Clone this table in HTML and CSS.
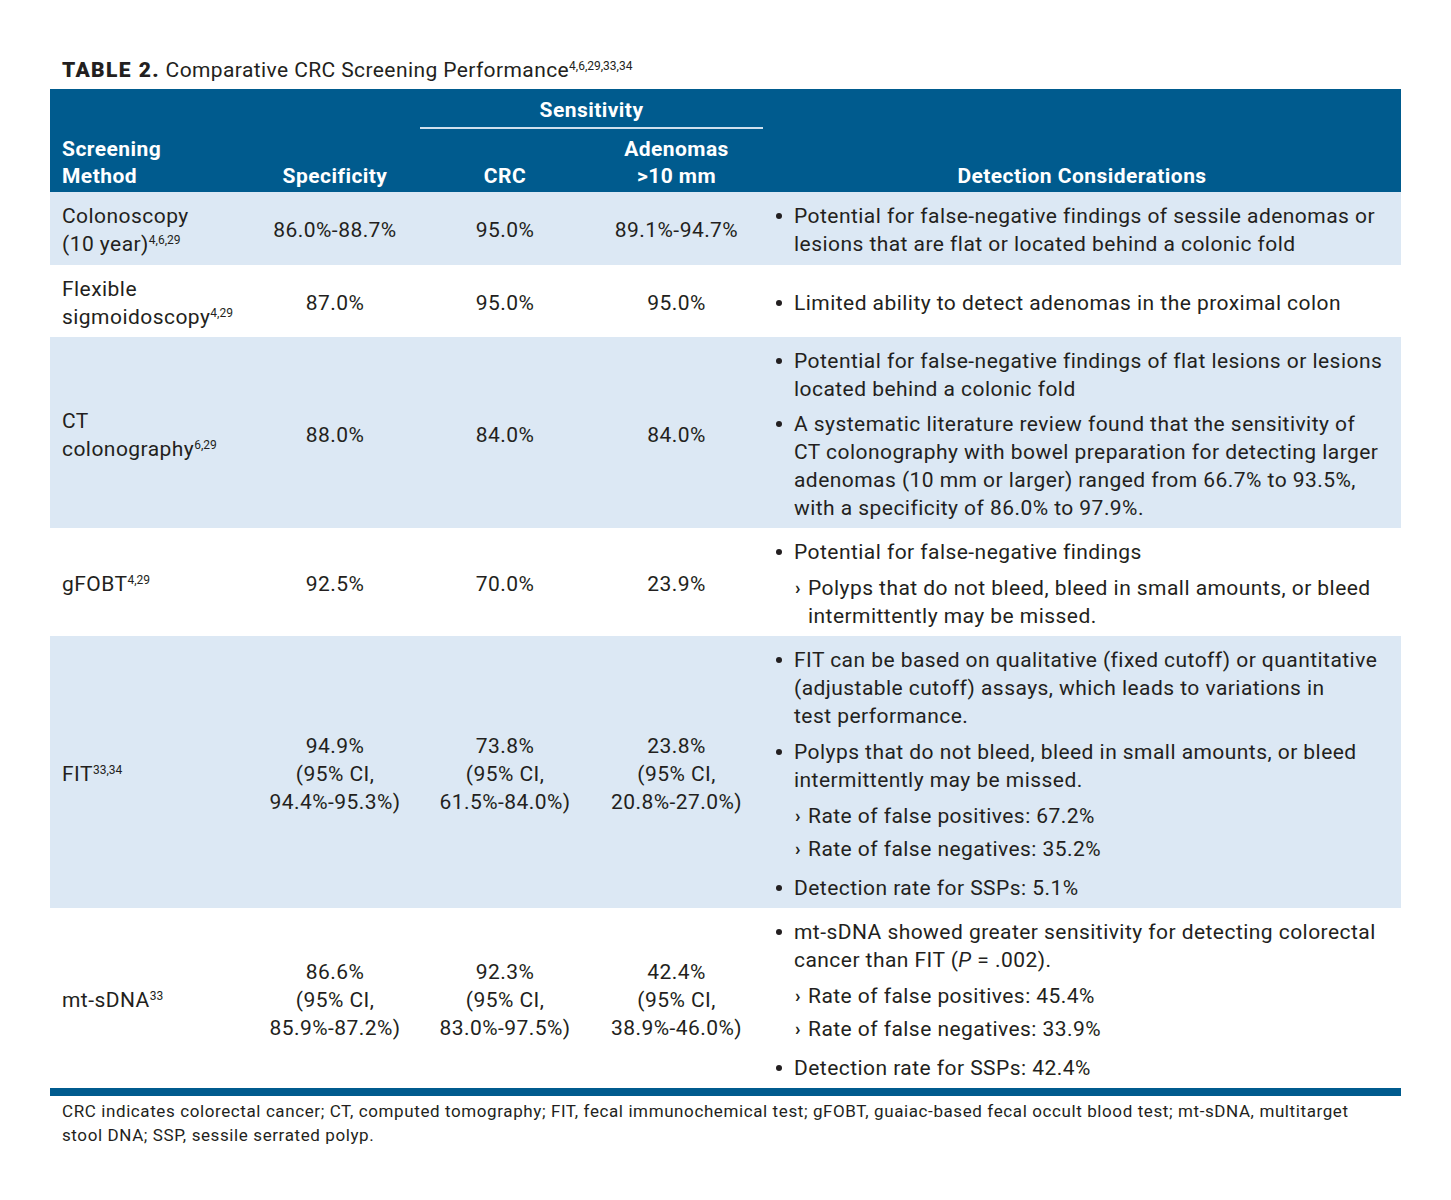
FILE: index.html
```html
<!DOCTYPE html>
<html>
<head>
<meta charset="utf-8">
<link rel="stylesheet" href="styles.css">
</head>
<body>
<div class="page">
  <div class="title"><span class="tnum">TABLE 2.</span> Comparative CRC Screening Performance<sup>4,6,29,33,34</sup></div>
  <table class="tbl">
    <colgroup>
      <col class="c1"><col class="c2"><col class="c3"><col class="c4"><col class="c5">
    </colgroup>
    <thead>
      <tr class="h1">
        <th rowspan="2" class="left">Screening<br>Method</th>
        <th rowspan="2">Specificity</th>
        <th colspan="2" class="sens">Sensitivity</th>
        <th rowspan="2">Detection Considerations</th>
      </tr>
      <tr class="h2">
        <th>CRC</th>
        <th>Adenomas<br>&gt;10 mm</th>
      </tr>
    </thead>
    <tbody>
      <tr class="shade first">
        <td class="left">Colonoscopy<br>(10 year)<sup>4,6,29</sup></td>
        <td>86.0%-88.7%</td>
        <td>95.0%</td>
        <td>89.1%-94.7%</td>
        <td class="det">
          <ul class="bl">
            <li>Potential for false-negative findings of sessile adenomas or<br>lesions that are flat or located behind a colonic fold</li>
          </ul>
        </td>
      </tr>
      <tr>
        <td class="left">Flexible<br>sigmoidoscopy<sup>4,29</sup></td>
        <td>87.0%</td>
        <td>95.0%</td>
        <td>95.0%</td>
        <td class="det">
          <ul class="bl">
            <li>Limited ability to detect adenomas in the proximal colon</li>
          </ul>
        </td>
      </tr>
      <tr class="shade">
        <td class="left">CT<br>colonography<sup>6,29</sup></td>
        <td>88.0%</td>
        <td>84.0%</td>
        <td>84.0%</td>
        <td class="det">
          <ul class="bl">
            <li>Potential for false-negative findings of flat lesions or lesions<br>located behind a colonic fold</li>
            <li>A systematic literature review found that the sensitivity of<br>CT colonography with bowel preparation for detecting larger<br>adenomas (10 mm or larger) ranged from 66.7% to 93.5%,<br>with a specificity of 86.0% to 97.9%.</li>
          </ul>
        </td>
      </tr>
      <tr>
        <td class="left">gFOBT<sup>4,29</sup></td>
        <td>92.5%</td>
        <td>70.0%</td>
        <td>23.9%</td>
        <td class="det">
          <ul class="bl">
            <li>Potential for false-negative findings
              <ul class="sub">
                <li>Polyps that do not bleed, bleed in small amounts, or bleed<br>intermittently may be missed.</li>
              </ul>
            </li>
          </ul>
        </td>
      </tr>
      <tr class="shade">
        <td class="left">FIT<sup>33,34</sup></td>
        <td>94.9%<br>(95% CI,<br>94.4%-95.3%)</td>
        <td>73.8%<br>(95% CI,<br>61.5%-84.0%)</td>
        <td>23.8%<br>(95% CI,<br>20.8%-27.0%)</td>
        <td class="det">
          <ul class="bl">
            <li>FIT can be based on qualitative (fixed cutoff) or quantitative<br>(adjustable cutoff) assays, which leads to variations in<br>test performance.</li>
            <li class="wide">Polyps that do not bleed, bleed in small amounts, or bleed<br>intermittently may be missed.
              <ul class="sub">
                <li>Rate of false positives: 67.2%</li>
                <li>Rate of false negatives: 35.2%</li>
              </ul>
            </li>
            <li>Detection rate for SSPs: 5.1%</li>
          </ul>
        </td>
      </tr>
      <tr class="last">
        <td class="left">mt-sDNA<sup>33</sup></td>
        <td>86.6%<br>(95% CI,<br>85.9%-87.2%)</td>
        <td>92.3%<br>(95% CI,<br>83.0%-97.5%)</td>
        <td>42.4%<br>(95% CI,<br>38.9%-46.0%)</td>
        <td class="det">
          <ul class="bl">
            <li>mt-sDNA showed greater sensitivity for detecting colorectal<br>cancer than FIT (<i>P</i> = .002).
              <ul class="sub">
                <li>Rate of false positives: 45.4%</li>
                <li>Rate of false negatives: 33.9%</li>
              </ul>
            </li>
            <li>Detection rate for SSPs: 42.4%</li>
          </ul>
        </td>
      </tr>
    </tbody>
  </table>
  <p class="foot">CRC indicates colorectal cancer; CT, computed tomography; FIT, fecal immunochemical test; gFOBT, guaiac-based fecal occult blood test; mt-sDNA, multitarget<br>stool DNA; SSP, sessile serrated polyp.</p>
</div>
</body>
</html>
```

FILE: styles.css
```css
html, body {
  margin: 0;
  padding: 0;
  background: #ffffff;
}

body {
  font-family: Roboto, "Liberation Sans", sans-serif;
  color: #231f20;
}

.page {
  padding: 58px 0 0 50px;
  width: 1351px;
}

.title {
  font-size: 21px;
  line-height: 24px;
  letter-spacing: 0.4px;
  padding-left: 12px;
  margin-bottom: 7px;
  color: #231f20;
}

.tnum {
  font-weight: 900;
  letter-spacing: 1.4px;
}

.title sup {
  font-size: 12px;
  vertical-align: 7px;
  line-height: 0;
  letter-spacing: 0;
}

.tbl {
  width: 1351px;
  border-collapse: collapse;
  table-layout: fixed;
  font-size: 21px;
  line-height: 28px;
  letter-spacing: 0.45px;
}

.c1 { width: 200px; }
.c2 { width: 170px; }
.c3 { width: 170px; }
.c4 { width: 173px; }
.c5 { width: 638px; }

thead th {
  background: #005b8e;
  color: #ffffff;
  font-weight: 700;
  text-align: center;
  line-height: 27px;
  padding: 0 0 2px 0;
  vertical-align: bottom;
}

thead th.left {
  text-align: left;
  padding-left: 12px;
}

thead tr.h1 th.sens {
  height: 39px;
  padding: 4px 0 0 0;
  box-sizing: border-box;
  vertical-align: middle;
  border-bottom: 2px solid #cfe0ee;
}

thead tr.h2 th {
  padding-top: 7px;
}

tbody td {
  text-align: center;
  vertical-align: middle;
  padding: 10px 0 6px 0;
}

tbody tr.first td {
  padding-bottom: 7px;
}

tbody td.left {
  text-align: left;
  padding-left: 12px;
}

tbody tr.shade td {
  background: #dce8f4;
}

tbody tr.last td {
  border-bottom: 8px solid #005b8e;
}

td sup {
  font-size: 12px;
  vertical-align: 7px;
  line-height: 0;
  letter-spacing: 0;
}

td.det {
  text-align: left;
  padding-left: 13px;
  padding-right: 4px;
  white-space: nowrap;
}

.bl, .sub {
  list-style: none;
  margin: 0;
  padding: 0;
}

.bl > li {
  padding-left: 18px;
  text-indent: -18px;
}

.bl > li + li {
  margin-top: 7px;
}

.bl > li.wide {
  margin-top: 8px;
}

.bl > li::before {
  content: "";
  display: inline-block;
  width: 6px;
  height: 6px;
  border-radius: 50%;
  background: #231f20;
  margin-right: 12px;
  vertical-align: 4px;
  text-indent: 0;
}

.sub {
  margin-top: 8px;
  padding-bottom: 4px;
}

.bl > li:last-child > .sub {
  padding-bottom: 0;
}

.sub > li {
  padding-left: 14px;
  text-indent: -14px;
}

.sub > li + li {
  margin-top: 5px;
}

.sub > li::before {
  content: "\203A";
  display: inline-block;
  width: 14px;
  padding-left: 1px;
  box-sizing: border-box;
  text-indent: 0;
  font-weight: 700;
  font-size: 18px;
  vertical-align: 1px;
}

.foot {
  margin: 3px 0 0 0;
  padding-left: 12px;
  font-size: 17px;
  line-height: 24px;
  letter-spacing: 0.6px;
  color: #231f20;
}
```
